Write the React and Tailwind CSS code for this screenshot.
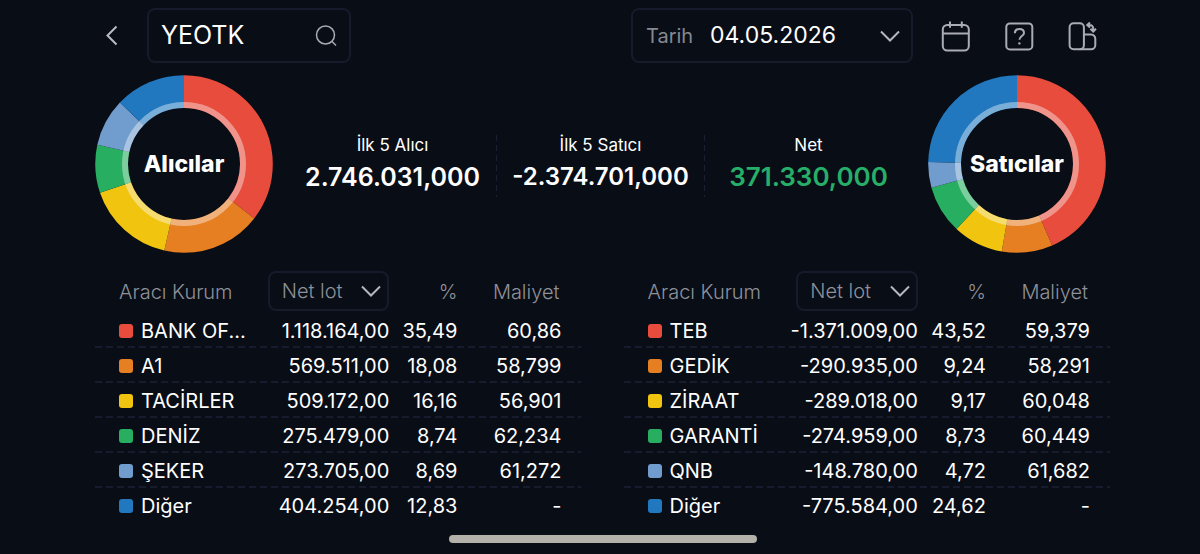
import { useState } from "react"

const COLORS = ["#e74c3c", "#e67e22", "#f1c40f", "#27ae60", "#719dce", "#2178bf"]

const buyers = [
    { name: "BANK OF...", lot: "1.118.164,00", percent: "35,49", cost: "60,86" },
    { name: "A1", lot: "569.511,00", percent: "18,08", cost: "58,799" },
    { name: "TACİRLER", lot: "509.172,00", percent: "16,16", cost: "56,901" },
    { name: "DENİZ", lot: "275.479,00", percent: "8,74", cost: "62,234" },
    { name: "ŞEKER", lot: "273.705,00", percent: "8,69", cost: "61,272" },
    { name: "Diğer", lot: "404.254,00", percent: "12,83", cost: "-" },
]

const sellers = [
    { name: "TEB", lot: "-1.371.009,00", percent: "43,52", cost: "59,379" },
    { name: "GEDİK", lot: "-290.935,00", percent: "9,24", cost: "58,291" },
    { name: "ZİRAAT", lot: "-289.018,00", percent: "9,17", cost: "60,048" },
    { name: "GARANTİ", lot: "-274.959,00", percent: "8,73", cost: "60,449" },
    { name: "QNB", lot: "-148.780,00", percent: "4,72", cost: "61,682" },
    { name: "Diğer", lot: "-775.584,00", percent: "24,62", cost: "-" },
]

const App = () => {
    return (
    <div className="min-h-screen bg-[#090d16] pl-[95px] pr-[90px] pt-2 font-['Inter',sans-serif] text-white">
        <TopBar />
        <section className="mt-3 flex items-center justify-between pr-1">
            <Donut title="Alıcılar" rows={buyers} />
            <div className="mt-1 flex flex-1 px-4">
                <Stat label="İlk 5 Alıcı" value="2.746.031,000" valueStyle="text-[25px]" />
                <Divider />
                <Stat label="İlk 5 Satıcı" value="-2.374.701,000" valueStyle="text-2xl" />
                <Divider />
                <Stat label="Net" value="371.330,000" valueStyle="text-[26px] text-[#27ae69]" />
            </div>
            <Donut title="Satıcılar" rows={sellers} />
        </section>
        <main className="mt-[18px] flex gap-[42px]">
            <BrokerTable id="buyers" rows={buyers} />
            <BrokerTable id="sellers" rows={sellers} />
        </main>
        <div className="mx-auto mt-3 h-2 w-[308px] rounded-full bg-[#b4b1ab]"></div>
    </div>
    )
}

const TopBar = () => {
    const [symbol, setSymbol] = useState("YEOTK")

    return (
        <header className="flex h-[55px] items-center pr-[11px]">
            <button aria-label="Geri" className="w-[52px] pl-[10px]">
                <svg className="h-6 w-4" viewBox="0 0 16 24" fill="none" stroke="#b9bcc4" strokeWidth="2">
                    <path d="M11.5 2.5 2.5 11.5l9 9" />
                </svg>
            </button>
            <label className="flex h-full w-[204px] items-center rounded-lg border-2 border-[#171a2b] pl-3 pr-[11px]">
                <input aria-label="Sembol" className="w-full min-w-0 bg-transparent text-[25px] outline-none"
                value={symbol} onChange={(ev) => setSymbol(ev.target.value)} />
                <svg className="h-6 w-6 shrink-0" viewBox="0 0 24 24" fill="none" stroke="#a9acb4" strokeWidth="1.5">
                    <circle cx="11.5" cy="11" r="9" />
                    <path d="m18 17.5 4 4" />
                </svg>
            </label>
            <div className="relative ml-auto flex h-full w-[282px] items-center rounded-lg border-2 border-[#171a2b] pl-[13px]">
                <label htmlFor="date" className="w-16 text-xl text-[#858890]">Tarih</label>
                <select id="date" className="h-full flex-1 appearance-none bg-transparent text-[23px] outline-none">
                    <option>04.05.2026</option>
                </select>
                <Chevron className="pointer-events-none absolute right-[11px] h-3 w-5" />
            </div>
            <div className="ml-7 flex gap-[31px]">
                <IconButton label="Takvim">
                    <rect x="1.8" y="5" width="26" height="25.5" rx="4.5" />
                    <path d="M9 1.5v6.3M20.8 1.5v6.3M2 13.6h26" />
                </IconButton>
                <IconButton label="Yardım">
                    <rect x="2.3" y="3.4" width="26" height="26" rx="3.5" />
                    <path d="M10.8 13.2c.2-2.7 2-4.2 4.6-4.2 2.7 0 4.6 1.6 4.6 4 0 3-4.6 3.2-4.6 6.8" />
                    <circle cx="15.4" cy="23.4" r="1.2" fill="#a9acb4" stroke="none" />
                </IconButton>
                <IconButton label="Görünüm">
                    <rect x="2.6" y="3.3" width="14.3" height="26" rx="4" />
                    <path d="M16.9 14.5h7.2a4.2 4.2 0 0 1 4.2 4.2v6.4a4.2 4.2 0 0 1-4.2 4.2H12.6" />
                    <path d="M20.5 5h2.3a3.4 3.4 0 0 1 3.4 3.4v2.4M23 2.4l-2.8 2.6L23 7.6M23.4 8.8l2.8 2.7L29 8.8" />
                </IconButton>
            </div>
        </header>
    )
}

const IconButton = (props) => (
    <button aria-label={props.label}>
        <svg className="h-8 w-8" viewBox="0 0 32 32" fill="none" stroke="#a9acb4" strokeWidth="2">
            {props.children}
        </svg>
    </button>
)

const Chevron = (props) => (
    <svg className={props.className} viewBox="0 0 20 12" fill="none" stroke="#b4b7bf" strokeWidth="2">
        <path d="m1 1.5 9 9 9-9" />
    </svg>
)

const Donut = (props) => {
    const values = props.rows.map((row) => parseFloat(row.percent.replace(",", ".")))
    const total = values.reduce((a, b) => a + b, 0)

    return (
        <div className="relative h-[178px] w-[178px] shrink-0">
            <svg className="h-full w-full -rotate-90" viewBox="0 0 178 178" fill="none">
                {values.map((value, index) => {
                    const before = values.slice(0, index).reduce((a, b) => a + b, 0)
                    return (
                        <circle key={index} cx="89" cy="89" r="72.4" stroke={COLORS[index]} strokeWidth="32.8"
                        pathLength={total} strokeDasharray={`${value} ${total - value}`} strokeDashoffset={-before} />
                    )
                })}
                <circle cx="89" cy="89" r="59" stroke="white" strokeOpacity="0.4" strokeWidth="6" />
            </svg>
            <div className="absolute inset-0 flex items-center justify-center text-[23px] font-extrabold">{props.title}</div>
        </div>
    )
}

const Stat = (props) => (
    <div className="flex flex-1 basis-0 flex-col items-center">
        <div className="text-[17px] leading-5">{props.label}</div>
        <div className={`mt-1 font-semibold leading-9 ${props.valueStyle}`}>{props.value}</div>
    </div>
)

const Divider = () => (
    <div className="h-[62px] w-px bg-[repeating-linear-gradient(#1b1f31_0_6px,transparent_6px_10px)]"></div>
)

const BrokerTable = (props) => {
    return (
        <div className="min-w-0 flex-1 basis-0">
        <table className="w-full table-fixed text-right text-xl">
            <thead>
                <tr className="h-[42px] text-[#8e9199]">
                    <th className="w-[35.5%] pl-6 text-left font-light">Aracı Kurum</th>
                    <th className="w-[25%] p-0 align-top font-light">
                        <div className="relative">
                            <select aria-label="Sütun" id={props.id}
                            className="h-10 w-full appearance-none rounded-lg border-2 border-[#171a2b] bg-transparent pl-3 outline-none">
                                <option>Net lot</option>
                            </select>
                            <Chevron className="pointer-events-none absolute right-2 top-3.5 h-3 w-5" />
                        </div>
                    </th>
                    <th className="w-[14%] font-light">%</th>
                    <th className="w-[25.5%] pr-[22px] font-light">Maliyet</th>
                </tr>
            </thead>
            <tbody>
                {props.rows.map((row, index) =>
                <tr key={index} className="h-[35px] bg-[repeating-linear-gradient(90deg,#171b2d_0_7px,transparent_7px_11px)] bg-size-[100%_2px] bg-bottom bg-no-repeat last:bg-none">
                    <td className="pl-6">
                        <div className="flex items-center gap-2">
                            <span className="h-[14px] w-[14px] rounded-[3px]" style={{ backgroundColor: COLORS[index] }}></span>
                            {row.name}
                        </div>
                    </td>
                    <td><div className="flex justify-end">{row.lot}</div></td>
                    <td>{row.percent}</td>
                    <td className="pr-5">{row.cost}</td>
                </tr>
                )}
            </tbody>
        </table>
        </div>
    )
}

export default App
